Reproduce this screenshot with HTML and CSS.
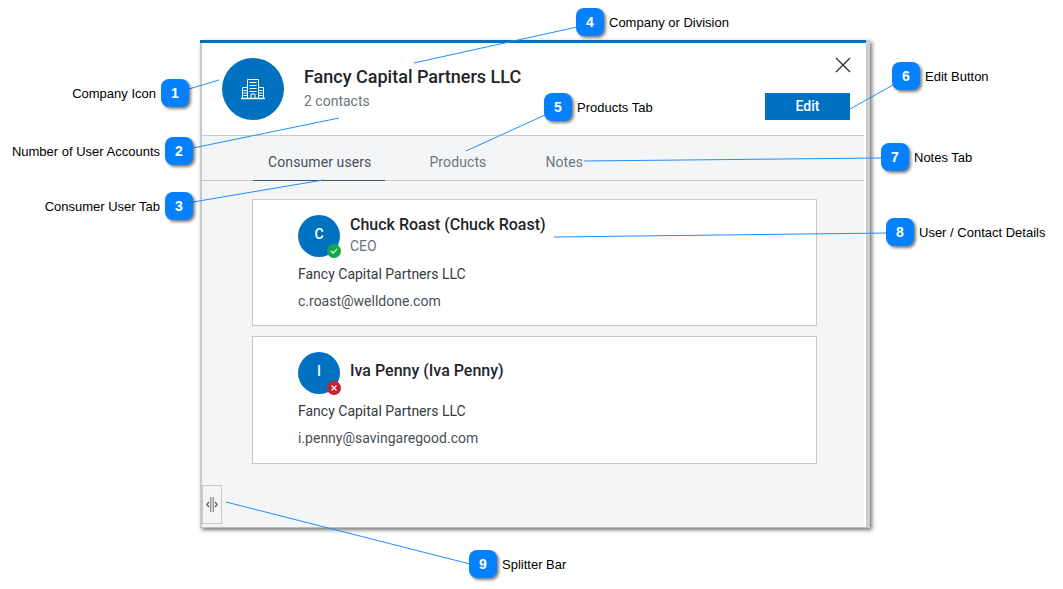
FILE: index.html
```
<!DOCTYPE html>
<html lang="en">
<head>
<meta charset="utf-8">
<title>Company details</title>
<link rel="stylesheet" href="styles.css">
</head>
<body>
<div class="stage">
  <section class="panel">
    <div class="bar"></div>
    <div class="sheet">
      <header class="head">
        <div class="logo">
          <svg width="24" height="22" viewBox="0 0 24 22" fill="none" stroke="#fff" stroke-width="1">
            <path d="M0 20.500h24" stroke-width="1.400"/>
            <path d="M1.500 20.500V9.500h5M6.500 20.500V1.500h11v19M17.500 9.500h5v11M8.500 4.500h7M8.500 7.500h7M8.500 10.500h7M8.500 13.500h7M2.500 12.500h4M2.500 15h4M2.500 17.500h4M17.500 12.500h4M17.500 15h4M17.500 17.500h4M10 20.500v-4.500h4v4.500"/>
          </svg>
        </div>
        <div class="titles">
          <h1 class="company">Fancy Capital Partners LLC</h1>
          <div class="count">2 contacts</div>
        </div>
        <div class="actions">
          <svg class="close" width="16" height="16" viewBox="0 0 16 16" stroke="#333" stroke-width="1.400" fill="none"><path d="M1 1l14 14M15 1L1 15"/></svg>
          <button class="edit">Edit</button>
        </div>
      </header>
      <nav class="tabs">
        <div class="tab active">Consumer users</div>
        <div class="tab">Products</div>
        <div class="tab">Notes</div>
      </nav>
      <main class="list">
        <article class="card">
          <div class="person">
            <div class="avatar">C<span class="badge ok"><svg width="8" height="8" viewBox="0 0 8 8" fill="none" stroke="#fff" stroke-width="1.100"><path d="M1 4l2.200 2.200L7 2"/></svg></span></div>
            <div>
              <div class="name">Chuck Roast (Chuck Roast)</div>
              <div class="role">CEO</div>
            </div>
          </div>
          <div class="org">Fancy Capital Partners LLC</div>
          <div class="mail">c.roast@welldone.com</div>
        </article>
        <article class="card">
          <div class="person">
            <div class="avatar">I<span class="badge no"><svg width="8" height="8" viewBox="0 0 8 8" fill="none" stroke="#fff" stroke-width="1.100"><path d="M1.500 1.500l5 5M6.500 1.500l-5 5"/></svg></span></div>
            <div class="solo">
              <div class="name">Iva Penny (Iva Penny)</div>
            </div>
          </div>
          <div class="org">Fancy Capital Partners LLC</div>
          <div class="mail">i.penny@savingaregood.com</div>
        </article>
      </main>
    </div>
    <div class="splitter">
      <svg width="12" height="15" viewBox="0 0 12 15" fill="none"><path stroke="#999" stroke-width="1.500" d="M4.700 0v15M7.300 0v15"/><path stroke="#666" stroke-width="1.300" d="M3 5L.8 7.500 3 10M9 5l2.200 2.500L9 10"/></svg>
    </div>
  </section>

  <svg class="leaders" width="1063" height="589" viewBox="0 0 1063 589" fill="none" stroke="#1f8fff" stroke-width="1">
    <path d="M189 89L219 80"/>
    <path d="M193 148L339 118"/>
    <path d="M193 202L323 180"/>
    <path d="M577 27L414 63"/>
    <path d="M545 115L466 151"/>
    <path d="M893 85L850 109"/>
    <path d="M881 158L584 161"/>
    <path d="M887 233L554 237"/>
    <path d="M470 564L226 502"/>
  </svg>

  <div class="callout c1"><span class="label">Company Icon</span><span class="num">1</span></div>
  <div class="callout c2"><span class="label">Number of User Accounts</span><span class="num">2</span></div>
  <div class="callout c3"><span class="label">Consumer User Tab</span><span class="num">3</span></div>
  <div class="callout c4"><span class="num">4</span><span class="label">Company or Division</span></div>
  <div class="callout c5"><span class="num">5</span><span class="label">Products Tab</span></div>
  <div class="callout c6"><span class="num">6</span><span class="label">Edit Button</span></div>
  <div class="callout c7"><span class="num">7</span><span class="label">Notes Tab</span></div>
  <div class="callout c8"><span class="num">8</span><span class="label">User / Contact Details</span></div>
  <div class="callout c9"><span class="num">9</span><span class="label">Splitter Bar</span></div>
</div>
</body>
</html>
```

FILE: styles.css
```
* { box-sizing: border-box; }
html, body { margin: 0; padding: 0; background: #fff; }
body { font-family: Roboto, "Liberation Sans", sans-serif; color: #333; }
.stage { position: relative; width: 1063px; height: 589px; overflow: hidden; }

.panel {
  position: absolute; left: 200px; top: 40px; width: 670px; height: 488px;
  display: flex; flex-direction: column;
  background: #f4f5f7;
  border-right: 4px solid #cdcdcd;
  border-bottom: 1px solid #bdbdbd;
  box-shadow: 2px 2px 4px rgba(0,0,0,.55);
}
.bar { height: 3px; flex: none; background: #0070c0; }
.sheet {
  flex: 1; display: flex; flex-direction: column; min-height: 0;
  border-left: 2px solid #c9c9c9;
  border-right: 2px solid #fff;
}
.head {
  height: 93px; flex: none;
  display: flex; align-items: flex-start;
  background: #fff;
  border-bottom: 1px solid #c8c8c8;
  padding: 15px 14px 0 20px;
}
.logo {
  width: 62px; height: 62px; border-radius: 50%; background: #0070c0;
  display: flex; align-items: center; justify-content: center; flex: none;
}
.titles { margin-left: 20px; padding-top: 7px; flex: 1; }
.company { margin: 0; font-size: 18px; line-height: 24px; font-weight: 500; color: #212529; }
.count { margin-top: 3px; font-size: 14px; line-height: 18px; color: #6c757d; }
.actions { display: flex; flex-direction: column; align-items: flex-end; flex: none; }
.close { margin: -1px -1px 20px 0; display: block; }
.edit {
  width: 85px; height: 27px; border: 0; background: #0070c0; color: #fff;
  font: 500 14px Roboto, "Liberation Sans", sans-serif; padding: 0 0 2px;
}

.tabs {
  height: 45px; flex: none; display: flex; padding-left: 51px;
  border-bottom: 1px solid #c8c8c8;
}
.tab {
  padding: 0 15px; margin-right: 29px; line-height: 52px; height: 45px;
  font-size: 14px; color: #6c757d; letter-spacing: .1px;
}
.tab.active { color: #495057; border-bottom: 1px solid #495057; padding-right: 14px; }

.list { flex: 1; padding: 18px 47px 0 50px; display: flex; flex-direction: column; gap: 10px; }
.card {
  height: 127px; flex: none; background: #fff; border: 1px solid #c8c8c8;
  padding: 15px 0 0 45px;
}
.card + .card { height: 128px; }
.person { display: flex; gap: 10px; height: 42px; }
.avatar {
  position: relative; width: 42px; height: 42px; border-radius: 50%; background: #0070c0;
  color: #fff; font-size: 14px; font-weight: 500; text-align: center; line-height: 38px; flex: none;
}
.badge {
  position: absolute; right: -1px; bottom: -1px; width: 14px; height: 14px; border-radius: 50%;
  display: flex; align-items: center; justify-content: center;
}
.badge.ok { background: #15a84a; }
.badge.no { background: #c8202f; }
.solo { padding-top: 9px; }
.name { font-size: 16px; line-height: 20px; font-weight: 500; color: #212529; }
.role { margin-top: 2px; font-size: 14px; line-height: 18px; color: #6c757d; }
.org { margin-top: 8px; font-size: 14px; line-height: 18px; color: #343a40; }
.mail { margin-top: 9px; font-size: 14px; line-height: 18px; color: #495057; }

.splitter {
  position: absolute; left: 2px; top: 445px; width: 20px; height: 39px;
  background: #f4f5f7; border: 1px solid #c8c8c8;
  display: flex; align-items: center; justify-content: center;
}

.leaders { position: absolute; left: 0; top: 0; pointer-events: none; }
.callout {
  position: absolute; display: flex; align-items: center; gap: 5px;
  font-family: "Liberation Sans", Arial, sans-serif; font-size: 13px; color: #000; white-space: nowrap;
}
.num {
  width: 28px; height: 28px; border-radius: 8px; background: #0580ff; color: #fff;
  font-weight: 700; font-size: 14px; text-align: center; line-height: 28px;
  box-shadow: 2px 2px 3px rgba(0,0,0,.5); flex: none;
}
.c1 { right: 874px; top: 79px; }
.c2 { right: 870px; top: 137px; }
.c3 { right: 870px; top: 192px; }
.c4 { left: 576px; top: 8px; }
.c5 { left: 544px; top: 93px; }
.c6 { left: 892px; top: 62px; }
.c7 { left: 881px; top: 143px; }
.c8 { left: 886px; top: 218px; }
.c9 { left: 469px; top: 550px; }
```
